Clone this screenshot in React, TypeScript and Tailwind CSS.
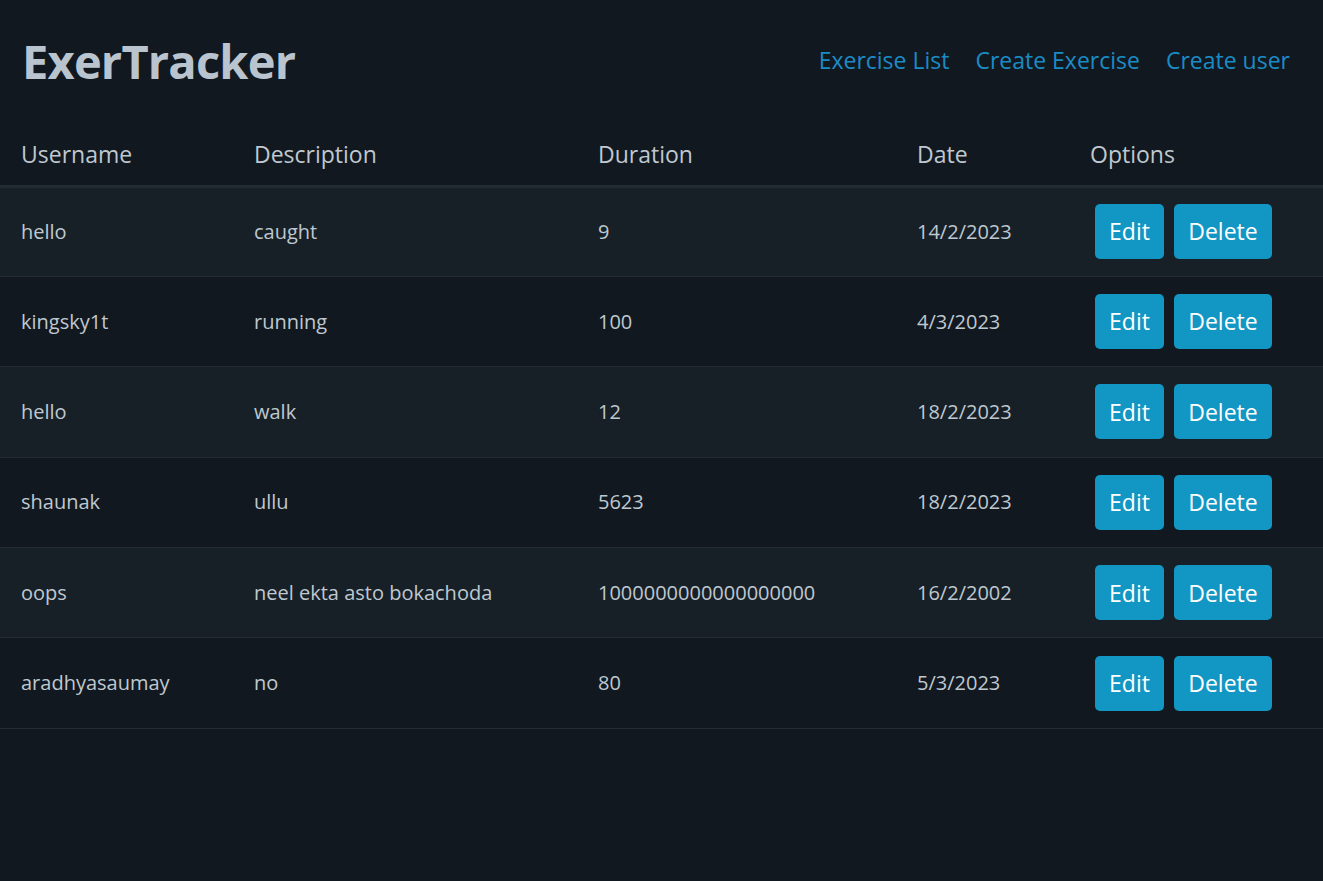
import React from 'react';

interface Exercise {
    username: string;
    description: string;
    duration: string;
    date: string;
}

const exercises: Exercise[] = [
    { username: 'hello', description: 'caught', duration: '9', date: '14/2/2023' },
    { username: 'kingsky1t', description: 'running', duration: '100', date: '4/3/2023' },
    { username: 'hello', description: 'walk', duration: '12', date: '18/2/2023' },
    { username: 'shaunak', description: 'ullu', duration: '5623', date: '18/2/2023' },
    { username: 'oops', description: 'neel ekta asto bokachoda', duration: '1000000000000000000', date: '16/2/2002' },
    { username: 'aradhyasaumay', description: 'no', duration: '80', date: '5/3/2023' },
];

const App: React.FC = () => {
    return (
        <div className="min-h-[881px] bg-[#12181f] text-[#bfc8d0] font-['Open_Sans',sans-serif]">
            {/* navbar */}
            <nav className="flex h-[125px] items-start justify-between pl-[22px] pr-[33px] pt-[28px]">
                <h1 className="text-[47px] font-bold leading-[66px] tracking-[-0.8px] text-[#b9c4cf]">ExerTracker</h1>
                <div className="flex gap-[26px] pt-[16px] text-[23px] leading-[32px] text-[#1a8cc5]">
                    <a href="#">Exercise List</a>
                    <a href="#">Create Exercise</a>
                    <a href="#">Create user</a>
                </div>
            </nav>

            <table className="w-full border-collapse text-left">
                <thead>
                    <tr className="border-b-[3px] border-[#222b34] text-[23px]">
                        <th className="h-[61px] w-[233px] pl-[21px] pb-[2px] align-middle font-normal">Username</th>
                        <th className="w-[344px] pl-[21px] pb-[2px] align-middle font-normal">Description</th>
                        <th className="w-[319px] pl-[21px] pb-[2px] align-middle font-normal">Duration</th>
                        <th className="w-[173px] pl-[21px] pb-[2px] align-middle font-normal">Date</th>
                        <th className="pl-[21px] pb-[2px] align-middle font-normal">Options</th>
                    </tr>
                </thead>
                <tbody className="text-[20px]">
                    {exercises.map((ex, i) => (
                        <tr
                            key={i}
                            className={`h-[90.4px] border-b border-[#242c34] ${i % 2 === 0 ? 'bg-[#182027]' : 'bg-[#12181f]'}`}
                        >
                            <td className="pl-[21px] align-middle">{ex.username}</td>
                            <td className="pl-[21px] align-middle">{ex.description}</td>
                            <td className="pl-[21px] align-middle">{ex.duration}</td>
                            <td className="pl-[21px] align-middle">{ex.date}</td>
                            <td className="pl-[26px] align-middle">
                                <div className="flex gap-[10px]">
                                    <button className="h-[55px] w-[69px] rounded-[5px] bg-[#1296c3] text-[23px] text-white">
                                        Edit
                                    </button>
                                    <button className="h-[55px] w-[98px] rounded-[5px] bg-[#1296c3] text-[23px] text-white">
                                        Delete
                                    </button>
                                </div>
                            </td>
                        </tr>
                    ))}
                </tbody>
            </table>
        </div>
    );
};

export default App;
